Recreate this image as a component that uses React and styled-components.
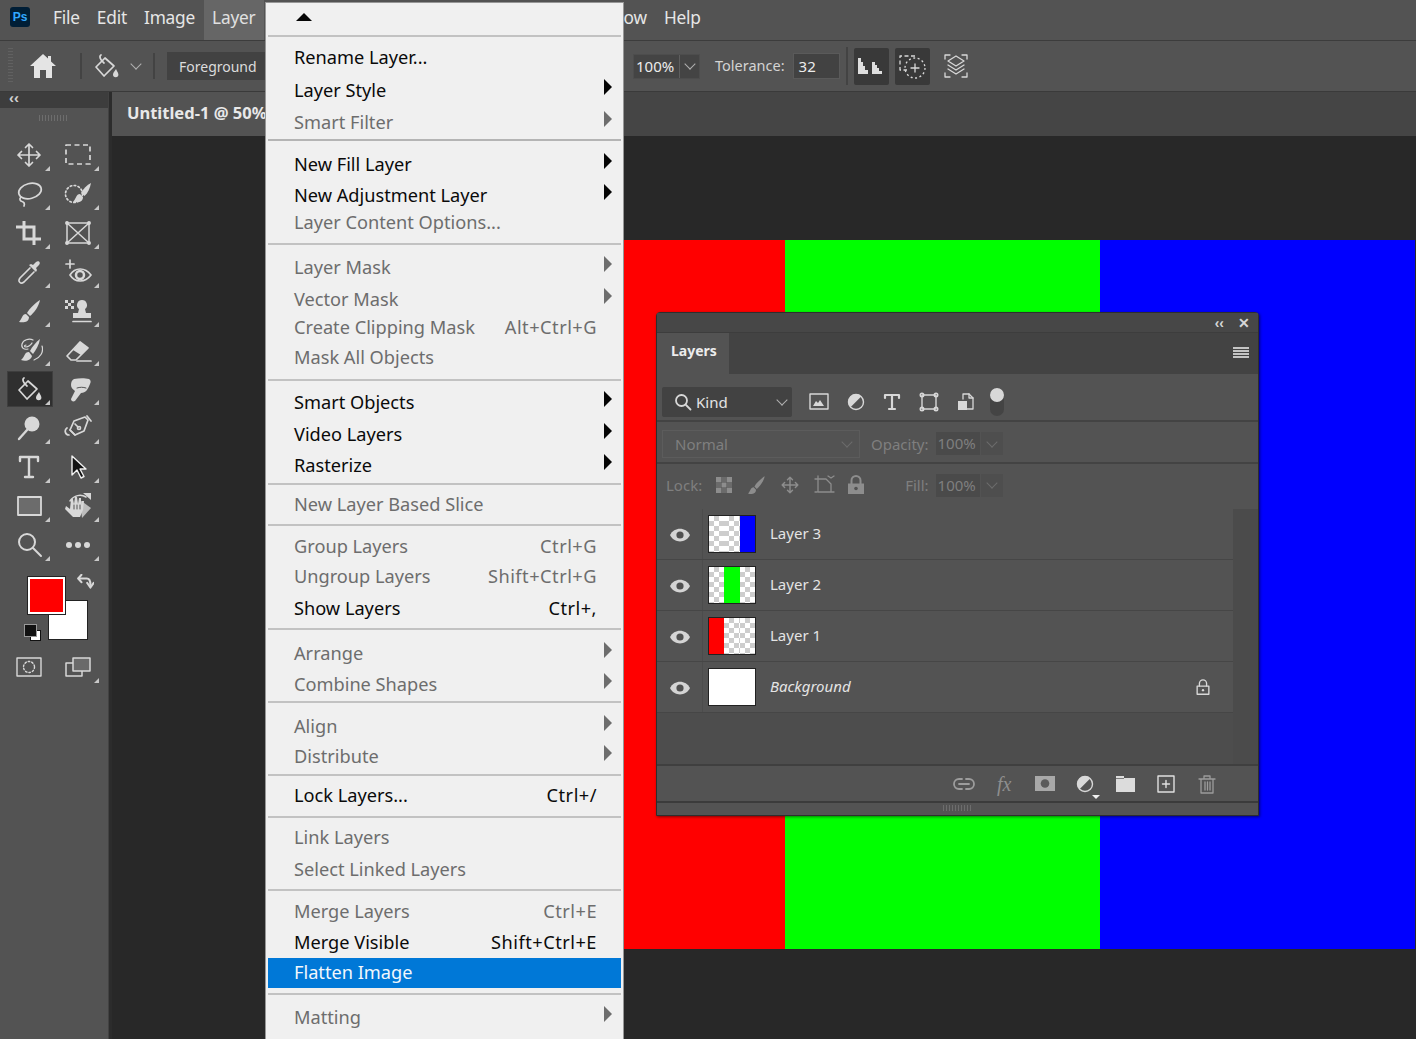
import styled, { createGlobalStyle } from "styled-components";

const GlobalStyle = createGlobalStyle`
    html, body {
        margin: 0;
        padding: 0;
        background: #282828;
    }
    * {
        box-sizing: border-box;
    }
`

const ink = "#d8d8d8";

const Ic = ({ size = 28, box = 28, children, color = ink, sw = 1.7 }) => (
    <svg width={size} height={size} viewBox={`0 0 ${box} ${box}`} fill="none" stroke={color} strokeWidth={sw} strokeLinecap="round" strokeLinejoin="round">
        {children}
    </svg>
)

const Solid = ({ d, color = ink }) => <path d={d} fill={color} stroke="none" />

const Bucket = ({ size = 28 }) => (
    <Ic size={size}>
        <path d="M13 6 4 15l8 9 10-10z" />
        <path d="M9 3c-2 1-1 5 3 8" />
        <Solid d="M24 17c-2 3-3 4-3 5.500a2.700 2.700 0 0 0 5.400 0c0-1.500-1-2.500-2.400-5.500z" />
    </Ic>
)

const tools = [
    { name: "move", icon: <Ic><path d="M14 3v22M3 14h22M10.500 6.500 14 3l3.500 3.500M10.500 21.500 14 25l3.500-3.500M6.500 10.500 3 14l3.500 3.500M21.500 10.500 25 14l-3.500 3.500" /></Ic> },
    { name: "marquee", icon: <Ic><rect x="2" y="4" width="24" height="19" strokeDasharray="5 3.500" strokeLinecap="butt" /></Ic> },
    { name: "lasso", icon: <Ic><ellipse cx="15" cy="11" rx="11.500" ry="7.500" transform="rotate(-14 15 11)" /><path d="M6 17c-2 2-1 4 1 4.500s3 2 2 4.500" /></Ic> },
    { name: "quick", icon: <Ic><circle cx="10" cy="14" r="8.500" strokeDasharray="1.500 2.500" /><Solid d="M27 3c-4 2-8 6-10 10l3.500 3C24 13 26 8 27 3z" /><Solid d="M16 14c-4 0-4 5-7 8 5 1 10 0 10-5z" /></Ic> },
    { name: "crop", icon: <Ic sw={3}><path d="M9 2v18h17M1 8h18v18" strokeLinecap="butt" strokeLinejoin="miter" /></Ic> },
    { name: "frame", icon: <Ic sw={1.500}><rect x="3" y="4" width="22" height="20" /><path d="m3 4 22 20M25 4 3 24" /><circle cx="3" cy="4" r="1.200" fill={ink} /><circle cx="25" cy="4" r="1.200" fill={ink} /><circle cx="3" cy="24" r="1.200" fill={ink} /><circle cx="25" cy="24" r="1.200" fill={ink} /></Ic> },
    { name: "dropper", icon: <Ic><path d="M15 10 5 20c-2 3-1 3.500 0 4.500s2 1 4-.5l10-10" /><Solid d="M14 7l2-1 2 1 3-3c3-2 5 1 3 3l-3 3 1 2-1 2z" /></Ic> },
    { name: "sampler", icon: <Ic><path d="M6 2v8M2 6h8" /><path d="M6 17c5-8 15-8 21 0-6 8-16 8-21 0z" /><circle cx="16" cy="17" r="4" strokeWidth="2.500" /></Ic> },
    { name: "brush", icon: <Ic><Solid d="M25 3c-5 3-11 9-13 13l3 3c4-3 9-10 10-16z" /><Solid d="M11 17c-4 0-4 5-7 8 5 1 10 0 10-5z" /></Ic> },
    { name: "stamp", icon: <Ic><Solid d="M18 3a5 5 0 0 1 3 9l1 4h5v5H9v-5h5l1-4a5 5 0 0 1 3-9z" /><path d="M9 24.500h18" /><Solid d="M1 3h3v3H1zM7 3h3v3H7zM4 6h3v3H4zM1 9h3v3H1zM7 9h3v3H7z" /></Ic> },
    { name: "history", icon: <Ic sw={1.200}><path d="M13 13c-4 1-7-1-6-5s7-6 11-4" /><path d="M11 9c-2 0-2 2 0 2s5-2 6-4" /><path d="M27 10c2 6-2 12-8 14" /><Solid d="M25 3c-4 3-8 8-10 12l3 3c3-4 6-9 7-15z" /><Solid d="M14 16c-5 0-4 5-8 8 5 2 10 0 11-4z" /></Ic> },
    { name: "eraser", icon: <Ic><path d="M3 20 16 6l8 6-12 12H7z" /><Solid d="M9 14 16 6l8 6-7 7z" /><path d="M13 25h14" /></Ic> },
    { name: "bucket", icon: <Bucket />, active: true },
    { name: "smudge", icon: <Ic><Solid d="M10 4c5-1 11-1 15 0 2 1 2 3 1 5-2 5-4 9-9 9l-6 8c-2 1-4 0-4-2l4-8c-2-2-4-3-4-6 0-3 1-5 3-6z" /><path d="M13 13c3-1 6-1 9 0" stroke="#535353" strokeWidth="1" /></Ic> },
    { name: "dodge", icon: <Ic sw={2.400}><circle cx="17" cy="10" r="7.500" fill={ink} stroke="none" /><path d="m12 16-8 9" /></Ic> },
    { name: "pen", icon: <Ic sw={1.700}><path d="M21 3 10 7l-4 9 5 5 9-4 4-11z" /><path d="m6 16 5 5M11 10l3 3" /><circle cx="15" cy="14" r="1.500" /><path d="M23 2l4 5M3 14c-3 2-2 7 2 7" /></Ic> },
    { name: "type", icon: <Ic sw={2.400}><path d="M5 8V4h18v4M14 4v20M10 24h8" /></Ic> },
    { name: "path", icon: <Ic color="#f0f0f0" sw={1.400}><path d="M8 3v19l5-5 4 8 3-1.500-4-7.500h6z" fill="#111" /></Ic> },
    { name: "rect", icon: <Ic sw={1.800}><rect x="3" y="5" width="23" height="18" fill="#6c6c6c" /></Ic> },
    { name: "rotate", icon: <Ic sw={1.500}><path d="M6 9c4-6 11-7 16-4" /><Solid d="M19 1h8v7z" /><Solid d="M16 8 27 16 18 26z" color="#bdbdbd" /><Solid d="M7 7h2l1 5 1-7h2l1 7 1-6h2l0 7 1-4h2l-1 9-3 7h-7l-8-8 1-3 4 3z" /><path d="M10 13v4M13 13v4M16 13v4" stroke="#535353" strokeWidth="1" /></Ic> },
    { name: "zoom", icon: <Ic sw={2}><circle cx="12" cy="11" r="8" /><path d="m18 17 8 8" /></Ic> },
    { name: "more", icon: <Ic sw={0}><circle cx="5" cy="14" r="3" fill={ink} /><circle cx="14" cy="14" r="3" fill={ink} /><circle cx="23" cy="14" r="3" fill={ink} /></Ic> },
];

const menu = [
    { pt: 0, pb: 0, rows: [{ up: true, h: 32 }] },
    { pt: 4, pb: 2, thick: true, rows: [
        { label: "Rename Layer...", h: 32 },
        { label: "Layer Style", h: 34, sub: true },
        { label: "Smart Filter", h: 30, sub: true, off: true },
    ] },
    { pt: 8, pb: 10, rows: [
        { label: "New Fill Layer", h: 30, sub: true },
        { label: "New Adjustment Layer", h: 32, sub: true },
        { label: "Layer Content Options...", h: 22, off: true },
    ] },
    { pt: 7, pb: 3, rows: [
        { label: "Layer Mask", h: 30, sub: true, off: true },
        { label: "Vector Mask", h: 34, sub: true, off: true },
        { label: "Create Clipping Mask", key: "Alt+Ctrl+G", h: 22, off: true },
        { label: "Mask All Objects", h: 38, off: true },
    ] },
    { pt: 6, pb: 4, rows: [
        { label: "Smart Objects", h: 30, sub: true },
        { label: "Video Layers", h: 34, sub: true },
        { label: "Rasterize", h: 28, sub: true },
    ] },
    { pt: 4, pb: 5, rows: [{ label: "New Layer Based Slice", h: 30, off: true }] },
    { pt: 5, pb: 3, rows: [
        { label: "Group Layers", key: "Ctrl+G", h: 30, off: true },
        { label: "Ungroup Layers", key: "Shift+Ctrl+G", h: 30, off: true },
        { label: "Show Layers", key: "Ctrl+,", h: 34 },
    ] },
    { pt: 8, pb: 1, rows: [
        { label: "Arrange", h: 30, sub: true, off: true },
        { label: "Combine Shapes", h: 32, sub: true, off: true },
    ] },
    { pt: 8, pb: 3, rows: [
        { label: "Align", h: 30, sub: true, off: true },
        { label: "Distribute", h: 30, sub: true, off: true },
    ] },
    { pt: 4, pb: 6, rows: [{ label: "Lock Layers...", key: "Ctrl+/", h: 30 }] },
    { pt: 4, pb: 3, rows: [
        { label: "Link Layers", h: 30, off: true },
        { label: "Select Linked Layers", h: 34, off: true },
    ] },
    { pt: 5, pb: 5, rows: [
        { label: "Merge Layers", key: "Ctrl+E", h: 30, off: true },
        { label: "Merge Visible", key: "Shift+Ctrl+E", h: 32 },
        { label: "Flatten Image", h: 30, hot: true },
    ] },
    { pt: 7, pb: 0, last: true, rows: [{ label: "Matting", h: 30, sub: true, off: true }] },
];

const layers = [
    { name: "Layer 3", stripes: ["", "", "#0000ff"] },
    { name: "Layer 2", stripes: ["", "#00ff00", ""] },
    { name: "Layer 1", stripes: ["#ff0000", "", ""] },
    { name: "Background", stripes: ["#fff", "#fff", "#fff"], locked: true },
];

const LockIcon = ({ color = ink, size = 20 }) => (
    <Ic size={size} box={20} color={color} sw={1.500}>
        <path d="M6 9V6a4 4 0 0 1 8 0v3" />
        <rect x="3.500" y="9" width="13" height="9" />
        <circle cx="10" cy="13.500" r="1.300" fill={color} stroke="none" />
    </Ic>
)

const Eye = () => (
    <svg width="20" height="14" viewBox="0 0 20 14">
        <path d="M0 7c4-8.500 16-8.500 20 0-4 8.500-16 8.500-20 0z" fill="#d4d4d4" />
        <circle cx="10" cy="7" r="3.600" fill="#505050" />
    </svg>
)

export default function App() {
    return (
        <Page>
            <GlobalStyle />

            <MenuBar>
                <PsLogo>Ps</PsLogo>
                <BarItem>File</BarItem>
                <BarItem>Edit</BarItem>
                <BarItem>Image</BarItem>
                <BarItem $open>Layer</BarItem>
                <BarItem $push>Window</BarItem>
                <BarItem>Help</BarItem>
            </MenuBar>

            <OptionsBar>
                <HomeSlot>
                    <BarGrip />
                    <svg width="26" height="24" viewBox="0 0 26 24">
                        <path d="M13 0 0 12h4v12h6v-8h6v8h6V12h4l-5-4.600V2h-3v2.600z" fill="#e4e4e4" />
                    </svg>
                </HomeSlot>
                <BarDivider />
                <PresetSlot>
                    <Bucket />
                    <Chevron />
                </PresetSlot>
                <BarDivider />
                <SourceSelect>Foreground</SourceSelect>
                <HiddenRun />
                <NumberCombo>
                    <span>100%</span>
                    <ComboArrow><Chevron /></ComboArrow>
                </NumberCombo>
                <OptionLabel>Tolerance:</OptionLabel>
                <NumberField>32</NumberField>
                <BarDivider $short />
                <ToggleButton>
                    <svg width="28" height="20" viewBox="0 0 28 20">
                        <path d="M1 2h3v4h2v4h2v4h3v4H1zM15 6h3v3h2v3h2v3h3v3H15z" fill="#dedede" />
                    </svg>
                </ToggleButton>
                <ToggleButton>
                    <Ic size={30} box={30} sw={1.300}>
                        <path d="M18 5H3v14h7" strokeDasharray="4 2.500" strokeLinecap="butt" />
                        <circle cx="18" cy="17" r="10" strokeDasharray="2 2.500" strokeLinecap="butt" />
                        <path d="M18 13v8M14 17h8" />
                    </Ic>
                </ToggleButton>
                <PlainButton>
                    <Ic size={28} sw={1.300}>
                        <path d="M3 7V3h5M20 3h5v4M3 21v4h5M20 25h5v-4" />
                        <path d="M14 4 6 9l8 5 8-5zM6 13l8 5 8-5M6 17l8 5 8-5" />
                    </Ic>
                </PlainButton>
            </OptionsBar>

            <Workspace>
                <Toolbox>
                    <ToolboxHead>‹‹</ToolboxHead>
                    <GripRow><Grip /></GripRow>
                    <ToolGrid>
                        {tools.map(t => (
                            <Tool key={t.name} $active={t.active}>
                                {t.icon}
                                <Flag />
                            </Tool>
                        ))}
                    </ToolGrid>
                    <ColorWell>
                        <BackSwatch />
                        <FrontSwatch />
                        <SwapArrow>
                            <Ic size={18} box={20} sw={2.400}>
                                <path d="M3 5h9c3 0 4 3 4 7" />
                                <path d="M6 1 2.500 5 6 9M12.500 10l3.500 5 3.500-5" />
                            </Ic>
                        </SwapArrow>
                        <DefaultBack />
                        <DefaultFront />
                    </ColorWell>
                    <ToolGrid>
                        <Tool>
                            <Ic size={28} sw={1.400}>
                                <rect x="2" y="5" width="24" height="18" />
                                <circle cx="14" cy="14" r="5.500" strokeDasharray="1.500 2" />
                            </Ic>
                        </Tool>
                        <Tool>
                            <Ic size={28} sw={1.500}>
                                <rect x="2" y="10" width="16" height="13" />
                                <rect x="9" y="5" width="17" height="13" fill="#6a6a6a" />
                            </Ic>
                            <Flag />
                        </Tool>
                    </ToolGrid>
                </Toolbox>

                <Document>
                    <TabStrip>
                        <DocTab>Untitled-1 @ 50%</DocTab>
                    </TabStrip>
                    <Canvas>
                        <Artwork>
                            <Band $color="#ff0000" />
                            <Band $color="#00ff00" />
                            <Band $color="#0000ff" />
                        </Artwork>
                    </Canvas>
                </Document>
            </Workspace>

            <LayersPanel>
                <PanelTitle>
                    <PanelGlyph>‹‹</PanelGlyph>
                    <PanelGlyph>✕</PanelGlyph>
                </PanelTitle>
                <PanelTabs>
                    <PanelTab>Layers</PanelTab>
                    <Hamburger><i /><i /><i /><i /></Hamburger>
                </PanelTabs>
                <FilterRow>
                    <KindSelect>
                        <Ic size={18} box={18} sw={1.800}><circle cx="7.500" cy="7.500" r="5.500" /><path d="m12 12 4.500 4.500" /></Ic>
                        <span>Kind</span>
                        <KindArrow><Chevron /></KindArrow>
                    </KindSelect>
                    <FilterIcons>
                        <Ic size={22} box={22} sw={1.400}><rect x="2" y="3" width="18" height="15" /><Solid d="M5 15l3-5 2 2 2-3 4 6z" /></Ic>
                        <Ic size={22} box={22} sw={1.400}><circle cx="11" cy="11" r="7.500" /><Solid d="M5.500 16.200 16.200 5.500A7.500 7.500 0 0 0 5.500 16.200z" /></Ic>
                        <Ic size={22} box={22} sw={2.200}><path d="M4 7V4h14v3M11 4v14M8 18h6" /></Ic>
                        <Ic size={22} box={22} sw={1.400}><rect x="4" y="4" width="14" height="14" /><circle cx="4" cy="4" r="1.800" /><circle cx="18" cy="4" r="1.800" /><circle cx="4" cy="18" r="1.800" /><circle cx="18" cy="18" r="1.800" /></Ic>
                        <Ic size={22} box={22} sw={1.300}><path d="M9 8V3h6l4 4v11h-6" /><path d="M15 3v4h4" /><Solid d="M4 10h9v9H4z" /></Ic>
                    </FilterIcons>
                    <FilterToggle />
                </FilterRow>
                <BlendRow>
                    <BlendSelect>
                        Normal
                        <BlendArrow><Chevron $dim /></BlendArrow>
                    </BlendSelect>
                    <DimLabel>Opacity:</DimLabel>
                    <DimField>100%</DimField>
                    <DimArrow><Chevron $dim /></DimArrow>
                </BlendRow>
                <LockRow>
                    <DimLabel>Lock:</DimLabel>
                    <LockIcons>
                        <svg width="16" height="16" viewBox="0 0 16 16">
                            <path d="M0 0h5v5H0zM11 0h5v5h-5zM5.500 5.500h5v5h-5zM0 11h5v5H0zM11 11h5v5h-5z" fill="#8d8d8d" />
                            <path d="M5 0h6v5H5zM0 5h5v6H0zM11 5h5v6h-5zM5 11h6v5H5z" fill="#6b6b6b" />
                        </svg>
                        <Ic size={22} color="#8d8d8d"><Solid color="#8d8d8d" d="M25 3c-5 3-11 9-13 13l3 3c4-3 9-10 10-16z" /><Solid color="#8d8d8d" d="M11 17c-4 0-4 5-7 8 5 1 10 0 10-5z" /></Ic>
                        <Ic size={20} color="#8d8d8d" sw={2}><path d="M14 3v22M3 14h22M10.500 6.500 14 3l3.500 3.500M10.500 21.500 14 25l3.500-3.500M6.500 10.500 3 14l3.500 3.500M21.500 10.500 25 14l-3.500 3.500" /></Ic>
                        <Ic size={22} box={22} color="#8d8d8d" sw={1.300}><path d="M5 2v16h16M2 5h11l5 5v8M15 2l3 2 3-2M2 18h2" /></Ic>
                        <svg width="16" height="20" viewBox="0 0 16 20">
                            <path d="M3.500 9V5.500a4.500 4.500 0 0 1 9 0V9" fill="none" stroke="#8d8d8d" strokeWidth="2" />
                            <path d="M0 8.500h16V19H0z" fill="#8d8d8d" />
                            <circle cx="8" cy="13.500" r="1.800" fill="#535353" />
                        </svg>
                    </LockIcons>
                    <FillGroup>
                        <DimLabel>Fill:</DimLabel>
                        <DimField>100%</DimField>
                        <DimArrow><Chevron $dim /></DimArrow>
                    </FillGroup>
                </LockRow>
                <ListArea>
                    <LayerList>
                        {layers.map(layer => (
                            <LayerRow key={layer.name}>
                                <EyeCell><Eye /></EyeCell>
                                <Thumb>
                                    {layer.stripes.map((c, i) => <Stripe key={i} $color={c} />)}
                                </Thumb>
                                <LayerName $italic={layer.locked}>{layer.name}</LayerName>
                                {layer.locked && <RowLock><LockIcon size={18} /></RowLock>}
                            </LayerRow>
                        ))}
                    </LayerList>
                    <ScrollTrack />
                </ListArea>
                <PanelFooter>
                    <FooterSlot>
                        <Ic size={24} box={24} color="#9c9c9c" sw={1.800}><path d="M10 7H7a5 5 0 0 0 0 10h3M14 7h3a5 5 0 0 1 0 10h-3M7 12h10" /></Ic>
                    </FooterSlot>
                    <FooterSlot><FxMark>fx</FxMark></FooterSlot>
                    <FooterSlot>
                        <svg width="20" height="15" viewBox="0 0 20 15">
                            <path d="M0 0h20v15H0z" fill="#a8a8a8" />
                            <circle cx="10" cy="7.500" r="4.300" fill="#5a5a5a" />
                        </svg>
                    </FooterSlot>
                    <FooterSlot>
                        <Ic size={22} box={22} sw={1.400}><circle cx="11" cy="11" r="7.500" /><Solid d="M5.500 16.200 16.200 5.500A7.500 7.500 0 0 0 5.500 16.200z" /></Ic>
                        <SmallCaret />
                    </FooterSlot>
                    <FooterSlot>
                        <svg width="19" height="16" viewBox="0 0 19 16">
                            <path d="M0 0h8v2h11v14H0z" fill="#dcdcdc" />
                            <path d="M0 2h8v1H0z" fill="#7c7c7c" />
                        </svg>
                    </FooterSlot>
                    <FooterSlot>
                        <Ic size={20} box={20} color="#e0e0e0" sw={1.400}><rect x="2" y="2" width="16" height="16" /><path d="M10 6.500v7M6.500 10h7" /></Ic>
                    </FooterSlot>
                    <FooterSlot>
                        <Ic size={20} box={20} color="#9c9c9c" sw={1.300}><path d="M2 5h16M7 5V2h6v3M4 5v14h12V5M8 8v8M10.500 8v8M13 8v8" /></Ic>
                    </FooterSlot>
                </PanelFooter>
                <PanelGrip><Grip /></PanelGrip>
            </LayersPanel>

            <LayerMenu>
                {menu.map((section, s) => (
                    <MenuSection key={s} $pt={section.pt} $pb={section.pb} $last={section.last} $thick={section.thick}>
                        {section.rows.map((row, r) => (
                            <MenuRow key={r} $h={row.h} $off={row.off} $hot={row.hot}>
                                {row.up ? <UpArrow /> : <span>{row.label}</span>}
                                {row.key && <Shortcut>{row.key}</Shortcut>}
                                {row.sub && <SubArrow $off={row.off} />}
                            </MenuRow>
                        ))}
                    </MenuSection>
                ))}
            </LayerMenu>
        </Page>
    )
}


const uiFont = `"Noto Sans", "Open Sans", sans-serif`;

const Page = styled.div`
    position: relative;
    width: 1416px;
    height: 1039px;
    overflow: hidden;
    display: flex;
    flex-direction: column;
    background: #282828;
    font-family: ${uiFont};
`

const MenuBar = styled.div`
    height: 41px;
    flex: none;
    display: flex;
    align-items: stretch;
    padding-left: 10px;
    background: #535353;
    border-bottom: 1px solid #3c3c3c;
`

const PsLogo = styled.div`
    width: 20px;
    height: 20px;
    margin: 7px 14.500px 0 0;
    border-radius: 3px;
    background: #001e36;
    color: #31a8ff;
    font: 700 12px/20px "Liberation Sans", sans-serif;
    text-align: center;
`

const BarItem = styled.div`
    display: flex;
    align-items: center;
    padding: 0 8.500px 6px;
    font-size: 17.300px;
    letter-spacing: -0.200px;
    color: ${p => (p.$open ? "#e0e0e0" : "#e6e6e6")};
    background: ${p => (p.$open ? "#666666" : "transparent")};
    margin-left: ${p => (p.$push ? "310px" : "0")};
`

const OptionsBar = styled.div`
    height: 51px;
    flex: none;
    display: flex;
    align-items: center;
    background: #535353;
    border-bottom: 1px solid #3a3a3a;
`

const HomeSlot = styled.div`
    position: relative;
    width: 80px;
    display: flex;
    justify-content: center;
    padding-left: 5px;
`

const BarGrip = styled.i`
    position: absolute;
    left: 8px;
    top: -6px;
    width: 5px;
    height: 36px;
    background: repeating-linear-gradient(180deg, #616161 0 1px, transparent 1px 3px);
`

const BarDivider = styled.div`
    width: 2px;
    height: ${p => (p.$short ? "38px" : "26px")};
    margin-left: ${p => (p.$short ? "6px" : "0")};
    background: #434343;
`

const PresetSlot = styled.div`
    width: 71px;
    display: flex;
    align-items: center;
    gap: 12px;
    padding-left: 10px;
`

const Chevron = styled.i`
    display: block;
    width: 8px;
    height: 8px;
    margin-top: -4px;
    border-right: 1.500px solid ${p => (p.$dim ? "#6c6c6c" : "#b0b0b0")};
    border-bottom: 1.500px solid ${p => (p.$dim ? "#6c6c6c" : "#b0b0b0")};
    transform: rotate(45deg);
`

const SourceSelect = styled.div`
    width: 110px;
    height: 28px;
    margin-left: 12px;
    padding-left: 12px;
    flex: none;
    background: #424242;
    color: #dcdcdc;
    font-size: 14px;
    line-height: 30px;
`

const HiddenRun = styled.div`
    width: 356px;
    flex: none;
`

const NumberCombo = styled.div`
    display: flex;
    width: 67px;
    height: 25px;
    flex: none;
    background: #444444;
    border: 1px solid #4d4d4d;
    color: #ececec;
    font-size: 15px;
    line-height: 23px;

    span {
        width: 46px;
        padding-left: 2px;
        border-right: 1px solid #5e5e5e;
    }
`

const ComboArrow = styled.div`
    flex: 1;
    display: flex;
    align-items: center;
    justify-content: center;
`

const OptionLabel = styled.div`
    margin-left: 15px;
    padding-bottom: 3px;
    color: #d4d4d4;
    font-size: 14.500px;
`

const NumberField = styled.div`
    width: 47px;
    height: 26px;
    margin-left: 8px;
    padding-left: 5px;
    background: #424242;
    border: 1px solid #5a5a5a;
    color: #ececec;
    font-size: 15px;
    line-height: 24px;
`

const ToggleButton = styled.div`
    width: 35px;
    height: 37px;
    margin-left: 6px;
    display: flex;
    align-items: center;
    justify-content: center;
    background: #393939;
    border-radius: 2px;
`

const PlainButton = styled.div`
    margin-left: 12px;
    display: flex;
`

const Workspace = styled.div`
    flex: 1;
    display: flex;
    min-height: 0;
`

const Toolbox = styled.div`
    width: 109px;
    flex: none;
    background: #535353;
    border-right: 1px solid #424242;
`

const ToolboxHead = styled.div`
    height: 16px;
    padding-left: 9px;
    background: #3d3d3d;
    color: #d0d0d0;
    font: 700 15px/12px "Liberation Sans", sans-serif;
`

const GripRow = styled.div`
    height: 27px;
    display: flex;
    justify-content: center;
    padding-top: 7px;
`

const Grip = styled.div`
    width: 30px;
    height: 6px;
    background: repeating-linear-gradient(90deg, #6d6d6d 0 1px, transparent 1px 3px);
`

const ToolGrid = styled.div`
    display: grid;
    grid-template-columns: 49px 49px;
    grid-auto-rows: 39px;
    padding-left: 5px;
    place-items: center;
`

const Tool = styled.div`
    position: relative;
    width: 46px;
    height: 36px;
    padding-right: 2px;
    display: flex;
    align-items: center;
    justify-content: center;
    background: ${p => (p.$active ? "#2f2f2f" : "transparent")};
    box-shadow: ${p => (p.$active ? "inset 0 0 0 1px #3e3e3e" : "none")};
`

const Flag = styled.i`
    position: absolute;
    right: 3px;
    bottom: 2px;
    width: 0;
    height: 0;
    border-left: 5px solid transparent;
    border-bottom: 5px solid #c8c8c8;
`

const ColorWell = styled.div`
    position: relative;
    height: 76px;
    margin-top: 7px;
`

const FrontSwatch = styled.div`
    position: absolute;
    left: 28px;
    top: 6px;
    width: 37px;
    height: 37px;
    background: #ff0000;
    border: 2px solid #fff;
    outline: 1px solid #222;
`

const BackSwatch = styled.div`
    position: absolute;
    left: 49px;
    top: 30px;
    width: 38px;
    height: 38px;
    background: #fff;
    outline: 1px solid #222;
`

const SwapArrow = styled.div`
    position: absolute;
    left: 76px;
    top: 3px;
`

const DefaultBack = styled.div`
    position: absolute;
    left: 30px;
    top: 59px;
    width: 11px;
    height: 11px;
    background: #fff;
    border: 1.500px solid #111;
`

const DefaultFront = styled.div`
    position: absolute;
    left: 25px;
    top: 54px;
    width: 11px;
    height: 11px;
    background: #111;
    outline: 1px solid #999;
`

const Document = styled.div`
    flex: 1;
    min-width: 0;
    display: flex;
    flex-direction: column;
    border-left: 3px solid #2c2c2c;
`

const TabStrip = styled.div`
    height: 44px;
    flex: none;
    display: flex;
    background: #454545;
`

const DocTab = styled.div`
    width: 240px;
    padding: 9px 0 0 15px;
    background: #535353;
    color: #e8e8e8;
    font-size: 16.500px;
    font-weight: 700;
    white-space: nowrap;
`

const Canvas = styled.div`
    flex: 1;
    padding: 104px 0 0 358px;
    background: #282828;
`

const Artwork = styled.div`
    display: flex;
    height: 709px;
`

const Band = styled.div`
    width: 315px;
    flex: none;
    background: ${p => p.$color};
`

const LayersPanel = styled.div`
    position: absolute;
    left: 656px;
    top: 312px;
    width: 603px;
    height: 504px;
    display: flex;
    flex-direction: column;
    background: #535353;
    border: 1px solid #2e2e2e;
    border-radius: 4px 4px 0 0;
    box-shadow: 1px 1px 3px rgba(0, 0, 0, 0.5);
    font-family: "Noto Sans", sans-serif;
`

const PanelTitle = styled.div`
    height: 20px;
    flex: none;
    display: flex;
    justify-content: flex-end;
    align-items: center;
    gap: 14px;
    padding-right: 8px;
    background: #474747;
    border-bottom: 1px solid #3d3d3d;
`

const PanelGlyph = styled.span`
    color: #d6d6d6;
    font: 700 14px/1 "Liberation Sans", sans-serif;
`

const PanelTabs = styled.div`
    height: 41px;
    flex: none;
    display: flex;
    align-items: stretch;
    justify-content: space-between;
    background: #434343;
`

const PanelTab = styled.div`
    width: 72px;
    padding-left: 14px;
    background: #535353;
    color: #ececec;
    font-size: 14px;
    font-weight: 700;
    line-height: 35px;
`

const Hamburger = styled.div`
    width: 16px;
    margin: 14px 9px 0 0;
    display: flex;
    flex-direction: column;
    gap: 1px;

    i {
        display: block;
        height: 2px;
        background: #c4c4c4;
    }
`

const FilterRow = styled.div`
    height: 48px;
    flex: none;
    display: flex;
    align-items: center;
    padding: 9px 0 0 5px;
    border-bottom: 2px solid #434343;
`

const KindSelect = styled.div`
    position: relative;
    width: 130px;
    height: 30px;
    display: flex;
    align-items: center;
    gap: 4px;
    padding-left: 12px;
    background: #424242;
    border-radius: 2px;
    color: #e4e4e4;
    font-size: 15px;
`

const KindArrow = styled.div`
    margin-left: auto;
    margin-right: 6px;
`

const FilterIcons = styled.div`
    display: flex;
    gap: 14.500px;
    margin-left: 16px;
`

const FilterToggle = styled.div`
    position: relative;
    width: 14px;
    height: 28px;
    margin-left: 14px;
    border-radius: 7px;
    background: #444444;

    &::before {
        content: "";
        position: absolute;
        left: 0;
        top: 0;
        width: 14px;
        height: 14px;
        border-radius: 50%;
        background: #d8d8d8;
    }
`

const BlendRow = styled.div`
    height: 42px;
    flex: none;
    display: flex;
    align-items: center;
    padding: 3px 0 0 5px;
    border-bottom: 2px solid #434343;
`

const BlendSelect = styled.div`
    width: 198px;
    height: 28px;
    flex: none;
    display: flex;
    align-items: center;
    justify-content: space-between;
    padding: 0 8px 0 12px;
    border: 1px solid #5c5c5c;
    color: #7f7f7f;
    font-size: 15px;
`

const BlendArrow = styled.div`
    display: flex;
`

const DimLabel = styled.div`
    margin-left: 11px;
    color: #7f7f7f;
    font-size: 15px;
`

const DimField = styled.div`
    width: 44px;
    height: 23px;
    margin-left: 7px;
    padding-left: 2px;
    background: #4a4a4a;
    color: #7f7f7f;
    font-size: 15px;
    line-height: 23px;
`

const DimArrow = styled.div`
    width: 22px;
    height: 23px;
    margin-left: 1px;
    display: flex;
    align-items: center;
    justify-content: center;
    background: #4e4e4e;
`

const LockRow = styled.div`
    height: 45px;
    flex: none;
    display: flex;
    align-items: center;
    padding-bottom: 3px;

    & > div:first-child {
        margin-left: 9px;
    }
`

const LockIcons = styled.div`
    display: flex;
    align-items: center;
    gap: 13px;
    margin-left: 14px;
`

const FillGroup = styled.div`
    display: flex;
    align-items: center;
    margin-left: 30px;
`

const ListArea = styled.div`
    height: 257px;
    flex: none;
    display: flex;
    background: #4d4d4d;
    border-bottom: 2px solid #3f3f3f;
`

const LayerList = styled.div`
    width: 576px;
    flex: none;
`

const ScrollTrack = styled.div`
    flex: 1;
    background: #4b4b4b;
`

const LayerRow = styled.div`
    height: 51px;
    display: flex;
    align-items: center;
    background: #535353;
    border-bottom: 1px solid #464646;
`

const EyeCell = styled.div`
    width: 46px;
    height: 100%;
    flex: none;
    display: flex;
    align-items: center;
    justify-content: center;
    padding: 2px 0 0 1px;
    border-right: 1px solid #4c4c4c;
`

const Thumb = styled.div`
    display: flex;
    width: 48px;
    height: 38px;
    margin-left: 5px;
    flex: none;
    border: 1px solid #222;
`

const Stripe = styled.div`
    flex: 1;
    background-image: ${p => (p.$color ? "none" : "conic-gradient(#cdcdcd 25%, #fff 0 50%, #cdcdcd 0 75%, #fff 0)")};
    background-size: 10px 10px;
    background-color: ${p => p.$color || "#fff"};
`

const LayerName = styled.div`
    margin-left: 14px;
    padding-bottom: 2px;
    color: #e4e4e4;
    font-size: 15px;
    font-style: ${p => (p.$italic ? "italic" : "normal")};
`

const RowLock = styled.div`
    margin-left: auto;
    margin-right: 21px;
    display: flex;
`

const PanelFooter = styled.div`
    height: 37px;
    flex: none;
    display: flex;
    justify-content: flex-end;
    align-items: center;
    padding-right: 31px;
    border-bottom: 2px solid #3b3b3b;
`

const FooterSlot = styled.div`
    position: relative;
    width: 40.500px;
    display: flex;
    justify-content: center;
`

const SmallCaret = styled.i`
    position: absolute;
    left: 27px;
    bottom: -4px;
    border-left: 4px solid transparent;
    border-right: 4px solid transparent;
    border-top: 4px solid #f0f0f0;
`

const FxMark = styled.span`
    color: #8e8e8e;
    font: italic 20px/1 "Liberation Serif", serif;
`

const PanelGrip = styled.div`
    flex: 1;
    display: flex;
    justify-content: center;
    padding-top: 2px;
`

const LayerMenu = styled.div`
    position: absolute;
    left: 265px;
    top: 2px;
    width: 359px;
    height: 1040px;
    padding: 0 2px;
    background: #f0f0f0;
    border: 1px solid #979797;
    font-family: "Noto Sans", sans-serif;
`

const MenuSection = styled.div`
    padding: ${p => p.$pt}px 0 ${p => p.$pb}px;
    border-bottom: ${p => (p.$last ? "none" : `2px solid ${p.$thick ? "#b4b4b4" : "#c2c2c2"}`)};
`

const MenuRow = styled.div`
    position: relative;
    display: flex;
    align-items: center;
    justify-content: space-between;
    height: ${p => p.$h}px;
    padding: 0 24px ${p => (p.$hot ? "3px" : "1px")} 26px;
    font-size: 18.200px;
    white-space: nowrap;
    color: ${p => (p.$hot ? "#f2f7fc" : p.$off ? "#6d6d6d" : "#0a0a0a")};
    background: ${p => (p.$hot ? "#0078d7" : "transparent")};
`

const Shortcut = styled.span`
    margin-left: 20px;
    letter-spacing: 0.500px;
`

const SubArrow = styled.i`
    position: absolute;
    right: 9px;
    top: calc(50% - 11px);
    border-top: 8px solid transparent;
    border-bottom: 8px solid transparent;
    border-left: 8px solid ${p => (p.$off ? "#6d6d6d" : "#050505")};
`

const UpArrow = styled.i`
    display: block;
    margin: -4px 0 0 2px;
    border-left: 8px solid transparent;
    border-right: 8px solid transparent;
    border-bottom: 8px solid #050505;
`
